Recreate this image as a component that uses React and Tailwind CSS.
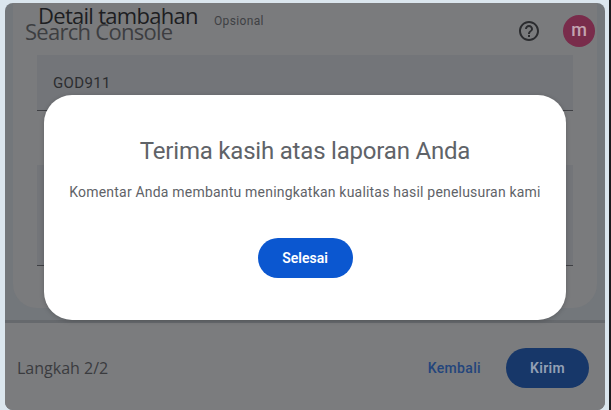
import React from "react";

function Field({ className, children }) {
  return (
    <div className={`mx-[24px] bg-[#737579] border-b border-[#3f4044] ${className}`}>
      {children}
    </div>
  );
}

export default function App() {
  return (
    <div className="relative w-[611px] h-[410px] overflow-hidden bg-[#dbe6ee] pt-[3px] pl-[5px] pr-[6px] font-['Roboto',sans-serif]">
      <div className="absolute right-0 top-0 bottom-0 w-[2px] bg-[#1b1c1e]" />
      <div className="relative h-[407px] w-[600px] rounded-[8px] bg-[#73777b] overflow-hidden flex flex-col">
        <div className="h-[305px] mx-[8px] rounded-b-[24px] bg-[#7a7b7d] flex flex-col shrink-0">
          <div className="relative h-[52px] shrink-0">
            <span className="absolute left-[12px] top-[16px] text-[22px] leading-[24px] text-[#3d3e41] font-['Open_Sans',sans-serif] tracking-[-0.72px]">Search Console</span>
            <span className="absolute left-[25px] top-[2px] text-[22px] leading-[20px] text-[#1d1e22] font-['Open_Sans',sans-serif] tracking-[-0.72px]">Detail tambahan</span>
            <span className="absolute left-[201px] top-[10px] text-[12px] leading-[16px] text-[#3f4144] tracking-[0.35px]">Opsional</span>
            <svg className="absolute left-[504px] top-[16px]" width="24" height="24" viewBox="0 0 24 24" fill="#2b2c2f">
              <path d="M11 18h2v-2h-2v2zm1-16C6.48 2 2 6.48 2 12s4.48 10 10 10 10-4.48 10-10S17.52 2 12 2zm0 18c-4.41 0-8-3.59-8-8s3.59-8 8-8 8 3.59 8 8-3.59 8-8 8zm0-14c-2.21 0-4 1.79-4 4h2c0-1.1.9-2 2-2s2 .9 2 2c0 2-3 1.75-3 5h2c0-2.25 3-2.5 3-5 0-2.21-1.79-4-4-4z" />
            </svg>
            <div className="absolute left-[550px] top-[12px] w-[32px] h-[32px] rounded-full bg-[#792c4b] flex items-center justify-center text-[#c3a3b0] text-[18px] font-medium leading-none pb-[2px]">m</div>
          </div>
          <Field className="h-[56px] shrink-0 flex items-center pl-[16px] pt-[2px] text-[15px] text-[#2c2d30] tracking-[0.35px]">
            GOD911
          </Field>
          <div className="h-[54px] shrink-0" />
          <Field className="h-[101px] shrink-0" />
        </div>
        <div className="flex-1" />
        <div className="h-[3px] bg-[#66696d] shrink-0" />
        <div className="h-[87px] shrink-0 bg-[#7b7c7e] flex items-center pl-[12px] pr-[16px] pt-[3px]">
          <span className="text-[16px] text-[#3a3b3e] font-['Open_Sans',sans-serif]">Langkah 2/2</span>
          <span className="ml-auto text-[14px] font-medium text-[#23457c] tracking-[0.35px] mr-[25px]">Kembali</span>
          <span className="w-[83px] h-[40px] rounded-full bg-[#173769] flex items-center justify-center text-[14px] font-semibold tracking-[0.3px] text-[#93a0b5]">Kirim</span>
        </div>
      </div>

      <div className="absolute left-[44px] top-[95px] w-[522px] h-[225px] rounded-[28px] bg-white flex flex-col items-center shadow-[0_1px_5px_rgba(0,0,0,0.2)]">
        <h2 className="mt-[40px] text-[24px] leading-[32px] text-[#5f6368] font-normal tracking-[-0.2px]">Terima kasih atas laporan Anda</h2>
        <p className="mt-[15px] text-[14px] leading-[20px] text-[#5f6368] tracking-[0.2px]">Komentar Anda membantu meningkatkan kualitas hasil penelusuran kami</p>
        <button className="mt-[36px] w-[95px] h-[40px] rounded-full bg-[#0b57d0] text-white text-[14px] font-semibold">Selesai</button>
      </div>
    </div>
  );
}
